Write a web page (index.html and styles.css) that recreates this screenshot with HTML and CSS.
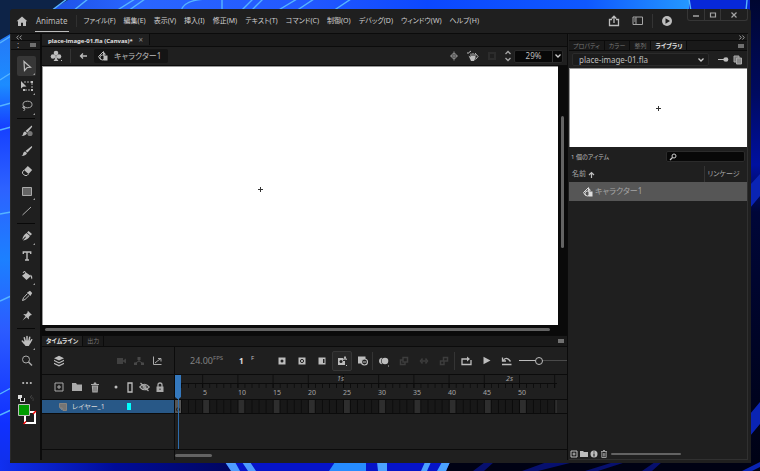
FILE: index.html
```html
<!DOCTYPE html>
<html lang="ja">
<head>
<meta charset="utf-8">
<title>Animate</title>
<link rel="stylesheet" href="styles.css">
</head>
<body>
<svg class="wallpaper" viewBox="0 0 760 471" preserveAspectRatio="none" aria-hidden="true">
  <defs>
    <linearGradient id="wl" x1="0" y1="0" x2="0" y2="1"><stop offset="0" stop-color="#2b6cf2"/><stop offset=".18" stop-color="#1c8cff"/><stop offset=".27" stop-color="#1640ff"/><stop offset=".4" stop-color="#2d62ff"/><stop offset=".55" stop-color="#1c80ff"/><stop offset=".7" stop-color="#2c5cff"/><stop offset=".9" stop-color="#1030ff"/><stop offset="1" stop-color="#1030e8"/></linearGradient>
    <linearGradient id="wt" x1="0" y1="0" x2="1" y2="0"><stop offset="0" stop-color="#1646d8"/><stop offset=".2" stop-color="#2a66ff"/><stop offset=".45" stop-color="#2258ff"/><stop offset=".62" stop-color="#0c48ff"/><stop offset=".85" stop-color="#0f58ff"/><stop offset="1" stop-color="#2498ff"/></linearGradient>
    <linearGradient id="wb" x1="0" y1="0" x2="1" y2="0"><stop offset="0" stop-color="#1030f0"/><stop offset=".5" stop-color="#000c98"/><stop offset="1" stop-color="#000660"/></linearGradient>
    <linearGradient id="wr" x1="0" y1="0" x2="0" y2="1"><stop offset="0" stop-color="#000630"/><stop offset=".2" stop-color="#000a60"/><stop offset=".35" stop-color="#0010a0"/><stop offset=".45" stop-color="#000638"/><stop offset="1" stop-color="#000214"/></linearGradient>
  </defs>
  <rect width="760" height="471" fill="#000214"/>
  <rect x="0" y="0" width="690" height="12" fill="url(#wt)"/>
  <rect x="689" y="0" width="63" height="12" fill="#0728d8"/>
  <rect x="0" y="0" width="14" height="471" fill="url(#wl)"/>
  <path d="M0 0H68L50 11 L12 33 0 40Z" fill="#0d2347"/>
  <g fill="none" stroke="#56b4ff" stroke-width="1.4">
    <path d="M67-1 51 11M88-1 73 11M135-1 116 11M145-1 128 11M181 11Q184-1 210-1M222-1V11M253-1 242 10M263-1 251 11M297-1 277 11M314-1 296 11M351-1 333 11M689-1 691 11M747 0 746 11"/>
    <path d="M0 43 11 36M0 80Q6 76 11 73M0 106 11 103M0 130 11 127M0 214 11 212M0 301 11 296M0 394 11 388M0 415 11 410"/>
  </g>
  <rect x="0" y="460" width="230" height="11" fill="url(#wb)"/>
  <path d="M225 462H450L446 471H231Z" fill="#0614c8"/>
  <path d="M225 462H235L240 471H231ZM242 462H250L256 471H248Z" fill="#4e9cff"/>
  <path d="M335 462H366V471H329Z" fill="#268cff"/>
  <path d="M377 462H387V471H378ZM425 462H431L427 471H421ZM442 462H450L446 471H437Z" fill="#4ba2ff"/>
  <path d="M485 462H494L484 471H473ZM547 462H574L538 471H522ZM614 462H626L598 471H585ZM655 462H662L652 471H642Z" fill="#07106e"/>
  <rect x="750" y="0" width="10" height="471" fill="url(#wr)"/>
  <path d="M760 174V196L750 208V185ZM760 402V424L750 436V414ZM760 462 742 471H752L760 467Z" fill="#0a24b4"/>
</svg>

<div class="window">
  <header class="menubar">
    <button class="ic home" aria-label="ホーム"><svg width="12" height="11" viewBox="0 0 12 11"><path fill="#bdbdbd" d="M6 .5.6 5.3H2V10h3V6.8h2V10h3V5.3h1.4Z"/></svg></button>
    <button class="app-tab">Animate</button>
    <nav class="menus">
      <button>ファイル(F)</button><button>編集(E)</button><button>表示(V)</button><button>挿入(I)</button><button>修正(M)</button><button>テキスト(T)</button><button>コマンド(C)</button><button>制御(O)</button><button>デバッグ(D)</button><button>ウィンドウ(W)</button><button>ヘルプ(H)</button>
    </nav>
    <div class="top-actions">
      <button class="ic" aria-label="共有"><svg width="12" height="12" viewBox="0 0 12 12" fill="none" stroke="#bdbdbd" stroke-width="1.3"><path d="M4 4.5H1.5V10.500H10.500V4.500H8M6 8V1.500M3.700 3.500 6 1.200 8.300 3.500"/></svg></button>
      <button class="ic" aria-label="ワークスペース"><svg width="12" height="10" viewBox="0 0 12 10"><path fill="none" stroke="#a5a5a5" d="M1 1H10.500V8.500H1Z"/><path stroke="#a5a5a5" d="M4 1V8.500M2 3H3.500M2 5H3.500"/></svg></button>
      <span class="vline"></span>
      <button class="ic" aria-label="ムービーのテスト"><svg width="12" height="12" viewBox="0 0 12 12"><circle cx="6" cy="6" r="5" fill="#bdbdbd"/><path fill="#1f1f1f" d="M4.500 3.200V8.800L9 6Z"/></svg></button>
    </div>
    <div class="win-buttons">
      <button aria-label="最小化"><svg width="8" height="8"><path stroke="#a5a5a5" stroke-width="1.500" d="M1 5H7"/></svg></button>
      <button aria-label="最大化"><svg width="8" height="8"><path fill="none" stroke="#a5a5a5" stroke-width="1.200" d="M1.500 2H6.500V6H1.500Z"/></svg></button>
      <button aria-label="閉じる"><svg width="8" height="8"><path stroke="#a5a5a5" stroke-width="1.200" d="M1.500 1.500 6.500 6.500M6.500 1.500 1.500 6.500"/></svg></button>
    </div>
  </header>

  <div class="workspace">
    <aside class="tools">
      <div class="collapse"><svg width="6" height="5" fill="none" stroke="#999"><path d="M2.500 .5 .8 2.500 2.500 4.500M5.500 .5 3.800 2.500 5.500 4.500"/></svg></div>
      <div class="grip"><span>:</span><i class="panel-menu"></i></div>
      <div class="tool-list">
        <button class="tool more on" aria-label="選択ツール"><svg width="14" height="14" viewBox="0 0 14 14"><path fill="none" stroke="#bdbdbd" stroke-width="1.200" d="M4 2.500 10.500 8.300 7.200 8.500 4.500 11.500Z"/></svg></button>
        <button class="tool more" aria-label="自由変形ツール"><svg width="14" height="14" viewBox="0 0 14 14"><path fill="none" stroke="#aaa" stroke-dasharray="2 1" d="M4 3H12V11H4"/><path fill="#bdbdbd" d="M1 2V9.500L3 7.700 6.500 7.500ZM3 10H5V12H3ZM11 2H13V4H11ZM11 10H13V12H11Z"/></svg></button>
        <button class="tool more" aria-label="投げ縄ツール"><svg width="14" height="14" viewBox="0 0 14 14" fill="none" stroke="#aaa"><ellipse cx="7.500" cy="5.500" rx="4.500" ry="3.300"/><path d="M3.500 7.500Q2 9 4 9.300T3.500 12"/><circle cx="4" cy="8.300" r="1"/></svg></button>
        <hr>
        <button class="tool" aria-label="流動ブラシツール"><svg width="14" height="14" viewBox="0 0 14 14" fill="#bdbdbd"><path d="M11.700 1.500Q12.500 2 12 3L7.500 8.500 5.500 7ZM5 7.500 7 9Q6 12 1.500 11.800 3.200 11 3.300 9 3.700 7.700 5 7.500Z"/><circle cx="10" cy="9.500" r="2.600" fill="#777"/></svg></button>
        <button class="tool" aria-label="ブラシツール"><svg width="14" height="14" viewBox="0 0 14 14" fill="#bdbdbd"><path d="M11.700 2Q12.500 2.500 12 3.500L7.500 8.500 5.500 7ZM5 7.500 7 9Q6 12 1.500 11.800 3.200 11 3.300 9 3.700 7.700 5 7.500Z"/></svg></button>
        <button class="tool" aria-label="消しゴムツール"><svg width="14" height="14" viewBox="0 0 14 14"><path fill="#bdbdbd" d="M7.800 2 12.200 6 8.500 10 4 6Z"/><path fill="none" stroke="#bdbdbd" d="M4 6 2.500 8V9.500L5 11.500H7L8.500 10"/></svg></button>
        <button class="tool more" aria-label="矩形ツール"><svg width="14" height="14" viewBox="0 0 14 14"><path fill="#656565" stroke="#aaa" d="M2.500 3.500H11.500V11.500H2.500Z"/></svg></button>
        <button class="tool" aria-label="線ツール"><svg width="14" height="14" viewBox="0 0 14 14"><path stroke="#aaa" d="M2.500 11 11 3"/></svg></button>
        <hr>
        <button class="tool more" aria-label="ペンツール"><svg width="14" height="14" viewBox="0 0 14 14" fill="#bdbdbd"><path d="M8.500 2 12 5 10.500 6.500 7 3.500ZM6.500 4 10 7Q8 10.800 3 11.500L6 8 5.300 7.400 2.300 10.800Q3 6 6.500 4Z"/></svg></button>
        <button class="tool" aria-label="テキストツール"><svg width="14" height="14" viewBox="0 0 14 14" fill="none" stroke="#bdbdbd" stroke-width="1.400"><path d="M3.300 5V3H10.700V5M7 3V11M5 11H9"/></svg></button>
        <button class="tool more" aria-label="ペイントバケツツール"><svg width="14" height="14" viewBox="0 0 14 14"><path fill="#bdbdbd" d="M6 3.500 11 7 6.500 11 2 6.700ZM10.500 5.500Q13 7 12 10.500 10.700 9 10.500 5.500Z"/><path fill="none" stroke="#bdbdbd" d="M7 7 4.500 2 3 4"/></svg></button>
        <button class="tool" aria-label="スポイトツール"><svg width="14" height="14" viewBox="0 0 14 14"><path fill="none" stroke="#bdbdbd" d="M7.500 4.500 3.500 8.800 2.500 11.500 5 10.500 9.300 6.300"/><path fill="#bdbdbd" d="M7 3.500 8 3 10 1.700 12.200 4 11 6 10.500 7Z"/></svg></button>
        <button class="tool" aria-label="アセットワープツール"><svg width="14" height="14" viewBox="0 0 14 14" fill="#bdbdbd"><path d="M7.800 1.800 12 6 10.500 6.300 8.800 8 9 10.500 6.500 8.200 2.500 11.500 5.600 7.300 3.200 5 6 5.200 7.500 3.500Z"/></svg></button>
        <hr>
        <button class="tool more" aria-label="手のひらツール"><svg width="14" height="14" viewBox="0 0 14 14"><path fill="none" stroke="#bdbdbd" stroke-width="1.500" stroke-linecap="round" d="M5.500 8 4.300 3.800M7 7V2.500M8.800 7.500 9.700 3.300M10 8.500 11.700 5.700M4.500 9.500 2.300 7"/><path fill="#bdbdbd" d="M4.800 6.500H9.800L10.500 9 8.800 12H5.500L3.500 9Z"/></svg></button>
        <button class="tool" aria-label="ズームツール"><svg width="14" height="14" viewBox="0 0 14 14" fill="none" stroke="#aaa"><circle cx="6" cy="5.500" r="3.500"/><path stroke-width="1.500" d="M8.500 8 12 11.500"/></svg></button>
        <button class="tool tall" aria-label="ツールバーを編集"><svg width="14" height="4" fill="#bdbdbd"><circle cx="3.200" cy="2" r="1.100"/><circle cx="7" cy="2" r="1.100"/><circle cx="10.800" cy="2" r="1.100"/></svg></button>
      </div>
      <svg class="swatches" width="20" height="32" viewBox="0 0 20 32" role="img" aria-label="線と塗り"><path fill="#ddd" d="M1 2H5V5H8V9H3V6H1Z"/><path fill="#111" d="M4 5H7V8H4Z"/><path fill="none" stroke="#3c3c3c" d="M13 4Q17 3 16 8M15 2 13 4 15 6"/><path fill="#1f1f1f" stroke="#fff" stroke-width="2" d="M8 19H18V30H8Z"/><path stroke="#f00000" stroke-width="1.500" d="M6.500 31 9 28.500M16 21 19 18"/><path fill="#009c00" stroke="#bdbdbd" d="M1.500 11.500H12.500V22.500H1.500Z"/></svg>
    </aside>

    <main class="center">
      <div class="doc-tabs"><button class="doc-tab">place-image-01.fla (Canvas)* <span>×</span></button></div>
      <div class="editbar">
        <button class="ic club" aria-label="シーンを編集"><svg width="14" height="14" viewBox="0 0 14 14" fill="#bdbdbd"><circle cx="7" cy="4" r="2.300"/><circle cx="4" cy="7.500" r="2.300"/><circle cx="10" cy="7.500" r="2.300"/><path d="M6.500 5H7.500L8 10 9.500 12H4.500L6 10ZM12 11H13V12H12Z"/></svg></button>
        <span class="vline"></span>
        <button class="ic back" aria-label="戻る"><svg width="8" height="8" fill="none" stroke="#bdbdbd" stroke-width="1.300"><path d="M8 4H1.500M4 1.500 1.500 4 4 6.500"/></svg></button>
        <div class="crumb"><svg width="12" height="12" viewBox="0 0 12 12"><path fill="none" stroke="#bdbdbd" d="M6.500 1.500 1.500 6.500 3.500 9.500"/><circle cx="5.500" cy="7.500" r="2.500" fill="none" stroke="#bdbdbd"/><path fill="#bdbdbd" d="M6 1 9 4.500 6 5ZM6.500 5.500H10.500V10.500H6.500Z"/></svg><span>キャラクター1</span></div>
        <div class="stage-tools">
          <button class="ic" aria-label="ステージを中央に配置"><svg width="10" height="10" viewBox="0 0 10 10" fill="none" stroke="#8c8c8c"><circle cx="5" cy="5" r="2.500"/><path d="M5 .5V9.500M1 5H9"/></svg></button>
          <button class="ic" aria-label="回転"><svg width="12" height="12" viewBox="0 0 12 12"><path fill="#bdbdbd" d="M1.500 5.500 3.500 7V3.500H4.500V6H5.500V3H6.500V6H7.500V4H8.500V8L7 11H4Z"/><path fill="none" stroke="#bdbdbd" d="M2 2.500 4 1M8 3 11 6.500 8.500 9.500M1 2V4"/></svg></button>
          <button class="ic" aria-label="クリップ"><svg width="10" height="10" fill="none" stroke="#2c2c2c"><path stroke-width="2" d="M2 2H8V8H2Z"/></svg></button>
          <button class="ic step" aria-label="ズーム増減"><svg width="8" height="12" fill="none" stroke="#a5a5a5" stroke-width="1.300"><path d="M1.500 4 4 1.500 6.500 4M1.500 8 4 10.500 6.500 8"/></svg></button>
          <div class="zoom"><input aria-label="ズーム" value="29%"><button aria-label="ズームの選択"><svg width="8" height="6" fill="none" stroke="#ccc" stroke-width="1.300"><path d="M1.500 1.500 4 4 6.500 1.500"/></svg></button></div>
        </div>
      </div>
      <div class="stage-area">
        <div class="stage"><svg class="cross at-stage" width="7" height="7"><path stroke="#333" d="M3.500 1V6M1 3.500H6"/></svg></div>
        <div class="vscroll"><i></i></div>
        <div class="hscroll"><i></i></div>
      </div>

      <section class="timeline">
        <div class="panel-tabs"><button class="on">タイムライン</button><button>出力</button><i class="panel-menu"></i></div>
        <div class="tl-body">
          <div class="layers">
            <div class="tl-bar">
              <button class="ic" aria-label="レイヤー表示"><svg width="12" height="12" viewBox="0 0 12 12" fill="#bdbdbd"><path d="M6 .8 11 3.200 6 5.600 1 3.200ZM1 4.800 6 7.200 11 4.800V6L6 8.500 1 6ZM1 7.700 6 10.100 11 7.700V9L6 11.500 1 9Z"/></svg></button>
              <button class="ic push" aria-label="カメラ"><svg width="10" height="10" fill="#414141"><path d="M1 2H7V8H1ZM7 4.500 10 2.500V7.500L7 5.500Z"/></svg></button>
              <button class="ic" aria-label="親子関係"><svg width="10" height="10"><path fill="#484848" d="M3.500 1H6.500V4H3.500ZM0 6.500H3V9H0ZM7 6.500H10V9H7Z"/><path fill="none" stroke="#484848" d="M5 4V5L1.500 7M5 5 8.500 7"/></svg></button>
              <button class="ic" aria-label="レイヤーの深度"><svg width="10" height="10" fill="none" stroke="#aaa"><path d="M1.500 .5V8.500H9.500M3 7 6 4.500 8.500 3M6 2.500H9V5.500"/></svg></button>
            </div>
            <div class="tl-head">
              <button class="ic" aria-label="新規レイヤー"><svg width="10" height="10" fill="none" stroke="#aaa"><path d="M1 1H9V9H1ZM5 3V7M3 5H7"/></svg></button>
              <button class="ic" aria-label="新規フォルダー"><svg width="12" height="10" fill="#aaa"><path d="M1 1H5L6 2.500H11V9H1Z"/></svg></button>
              <button class="ic" aria-label="削除"><svg width="10" height="11" fill="#aaa"><path d="M1 2H3.500L4 .5H6L6.500 2H9V3H1ZM1.800 3.500H8.200L7.700 10.500H2.300Z"/><path stroke="#444" stroke-width=".7" d="M4 4.500V9.500M6 4.500V9.500"/></svg></button>
              <button class="ic push" aria-label="ハイライト"><svg width="6" height="6" fill="#bdbdbd"><circle cx="3" cy="3" r="1.500"/></svg></button>
              <button class="ic" aria-label="アウトライン"><svg width="6" height="11" fill="none" stroke="#bdbdbd" stroke-width="1.300"><path d="M1 1H5V10H1Z"/></svg></button>
              <button class="ic" aria-label="表示・非表示"><svg width="11" height="10" fill="none" stroke="#aaa" stroke-width="1.200"><path d="M.8 5Q5.500-.5 10.200 5 5.500 10.500 .8 5ZM1.500 1 9.500 9"/><circle cx="5.500" cy="5" r="1.500"/></svg></button>
              <button class="ic" aria-label="ロック"><svg width="8" height="11"><path fill="none" stroke="#aaa" stroke-width="1.300" d="M2 5V3Q2 1 4 1T6 3V5"/><path fill="#aaa" d="M.5 4.500H7.500V10H.5Z"/><path stroke="#222" d="M4 6.500V8"/></svg></button>
            </div>
            <div class="layer"><svg width="8" height="8" viewBox="0 0 8 8"><path fill="#757575" stroke="#a08f80" stroke-width=".7" d="M.5 .5H7.500V7.500H4L3.500 5 .5 4.500Z"/><path fill="#999" d="M.5 5 3 5.500 3.500 7.500Z"/></svg><span>レイヤー_1</span><i class="chip"></i></div>
            <div class="tl-empty"></div>
            <div class="tl-foot"></div>
          </div>
          <div class="frames">
            <div class="tl-bar">
              <span class="fps">24.00<sup>FPS</sup></span><b class="frame-no">1</b><span class="unit">F</span>
              <div class="frame-tools">
                <button class="ic" aria-label="キーフレーム"><svg width="8" height="8"><path fill="#bdbdbd" d="M.5 .5H7.500V7.500H.5Z"/><circle cx="4" cy="4" r="1.500" fill="#222"/></svg></button>
                <button class="ic" aria-label="空白キーフレーム"><svg width="8" height="8"><path fill="#bdbdbd" d="M.5 .5H7.500V7.500H.5Z"/><circle cx="4" cy="4" r="1.600" fill="none" stroke="#222"/></svg></button>
                <button class="ic" aria-label="フレーム"><svg width="8" height="8"><path fill="#bdbdbd" d="M.5 .5H7.500V7.500H.5Z"/><path fill="#222" d="M5 2H6.500V6H5Z"/></svg></button>
                <button class="ic on" aria-label="自動キーフレーム"><svg width="12" height="12"><path fill="#bdbdbd" d="M2 3H7V6H9V10H2Z"/><circle cx="5" cy="6.500" r="1.500" fill="#222"/><path fill="none" stroke="#bdbdbd" d="M7.500 5 9 1.500 10.500 5M8 4H10M10 10.500H11"/></svg></button>
                <button class="ic" aria-label="フレームを削除"><svg width="11" height="11"><path fill="#bdbdbd" d="M1 1.500H8.500V5L5 8.500H1Z"/><circle cx="7.500" cy="7" r="3" fill="#222" stroke="#bdbdbd" stroke-width="1.200"/><path stroke="#bdbdbd" d="M6 7H9"/></svg></button>
                <span class="vline"></span>
                <button class="ic" aria-label="オニオンスキン"><svg width="12" height="12" fill="#bdbdbd"><circle cx="7" cy="6" r="3.300"/><path d="M4.200 2.700Q1 3 1 6T4.200 9.300Q2 6 4.200 2.700ZM10 10.500H11V11.500H10Z"/></svg></button>
                <button class="ic" aria-label="複数フレームを編集"><svg width="10" height="10" fill="none" stroke="#3d3d3d" stroke-width="1.500"><path d="M4 1.500H8.500V6H4ZM4 4H1.500V8.500H6V6"/></svg></button>
                <button class="ic" aria-label="トゥイーン"><svg width="10" height="8" fill="none" stroke="#3d3d3d" stroke-width="1.500"><path d="M3.500 1.500 1.500 4 3.500 6.500M6.500 1.500 8.500 4 6.500 6.500M4 3V5M6 3V5"/></svg></button>
                <button class="ic" aria-label="シェイプトゥイーン"><svg width="10" height="10" fill="none" stroke="#3d3d3d" stroke-width="1.500"><path d="M4.500 4.500V1.500H8.500V5H4.500ZM5 5.500V8.500H1.500V5H4"/></svg></button>
                <span class="vline"></span>
                <button class="ic" aria-label="ループ"><svg width="11" height="10" fill="none" stroke="#bdbdbd" stroke-width="1.300"><path d="M3 3H1V8.500H10V4M2 3H7"/><path fill="#bdbdbd" stroke="none" d="M6 .5 9 3 6 5.500Z"/></svg></button>
                <button class="ic" aria-label="再生"><svg width="9" height="9" fill="#bdbdbd"><path d="M1.500 .8V8.200L8.500 4.500Z"/></svg></button>
                <button class="ic" aria-label="タイムラインのリセット"><svg width="11" height="10" fill="none" stroke="#bdbdbd" stroke-width="1.300"><path d="M2 5Q5-.5 9.500 5.500M1.500 1.500V5H5M1 8.500H10.500"/></svg></button>
                <input type="range" aria-label="タイムラインの拡大縮小" min="0" max="10" value="4">
              </div>
            </div>
            <div class="ruler">
              <svg class="ticks" width="382" height="24" viewBox="0 0 382 24"><defs><pattern id="tk" width="7.04" height="24" patternUnits="userSpaceOnUse"><path fill="#080808" d="M6.300 9H7.040V13H6.300Z"/></pattern><pattern id="tk5" x="-7.04" width="35.200" height="24" patternUnits="userSpaceOnUse"><path fill="#080808" d="M34.400 0H35.200V13H34.400Z"/></pattern></defs><rect width="381" height="24" fill="url(#tk)"/><rect x="10" width="371" height="24" fill="url(#tk5)"/><path fill="#0b0b0b" d="M0 8H382V9H0Z"/></svg>
              <div class="seconds"><span>1s</span><span>2s</span></div>
              <div class="numbers"><span>5</span><span>10</span><span>15</span><span>20</span><span>25</span><span>30</span><span>35</span><span>40</span><span>45</span><span>50</span></div>
            </div>
            <div class="frame-row"><svg width="382" height="13" viewBox="0 0 382 13"><defs><pattern id="fr" width="7.04" height="13" patternUnits="userSpaceOnUse"><path fill="#0b0b0b" d="M6.100 0H7.040V13H6.100Z"/></pattern><pattern id="fr5" x="-7.04" width="35.200" height="13" patternUnits="userSpaceOnUse"><path fill="#2e2e2e" d="M0 0H6.100V13H0Z"/></pattern></defs><rect width="382" height="13" fill="#181818"/><rect x="10" width="372" height="13" fill="url(#fr5)"/><rect width="382" height="13" fill="url(#fr)"/><rect width="6" height="13" fill="#565656"/><rect x="1.500" y="8" width="3" height="3" rx="1" fill="none" stroke="#222"/></svg></div>
            <div class="tl-empty"></div>
            <div class="tl-foot"><i></i></div>
            <div class="playhead"></div>
          </div>
        </div>
      </section>
    </main>

    <aside class="library">
      <div class="collapse"><svg width="6" height="5" fill="none" stroke="#999"><path d="M.5 .5 2.200 2.500 .5 4.500M3.500 .5 5.200 2.500 3.500 4.500"/></svg></div>
      <div class="panel-tabs"><button>プロパティ</button><button>カラー</button><button>整列</button><button class="on">ライブラリ</button><i class="panel-menu"></i></div>
      <div class="lib-doc">
        <select aria-label="ドキュメント"><option>place-image-01.fla</option></select>
        <svg class="chev" width="8" height="6" fill="none" stroke="#ccc" stroke-width="1.300"><path d="M1.500 1.500 4 4 6.500 1.500"/></svg>
        <button class="ic" aria-label="ライブラリを固定"><svg width="11" height="7" fill="#bdbdbd"><path d="M0 3H5V4H0ZM5 3 7 1.500V5.500L5 4Z"/><circle cx="8" cy="3.500" r="2.300"/></svg></button>
        <button class="ic" aria-label="新規ライブラリパネル"><svg width="10" height="10"><path fill="#777" stroke="#aaa" d="M1 1H6V7H1Z"/><path fill="#888" stroke="#aaa" d="M3.500 3H8.500V9H3.500Z"/></svg></button>
      </div>
      <div class="preview"><svg class="cross" width="7" height="7"><path stroke="#333" d="M3.500 1V6M1 3.500H6"/></svg></div>
      <div class="lib-search"><label for="q">1 個のアイテム</label><div class="search"><svg width="8" height="8" fill="none" stroke="#ccc"><circle cx="5" cy="3" r="2"/><path stroke-width="1.300" d="M3.500 4.500 1 7"/></svg><input id="q" type="search"></div></div>
      <table>
        <thead><tr><th>名前 <svg width="7" height="7" fill="none" stroke="#bdbdbd" stroke-width="1.200"><path d="M3.500 7V1.500M1 4 3.500 1.500 6 4"/></svg></th><th class="link">リンケージ</th></tr></thead>
        <tbody><tr><td><svg width="12" height="12" viewBox="0 0 12 12"><path fill="none" stroke="#ddd" d="M6.500 1.500 1.500 6.500 3.500 9.500"/><circle cx="5.500" cy="7.500" r="2.500" fill="none" stroke="#ddd"/><path fill="#ddd" d="M6 1 9 4.500 6 5ZM6.500 5.500H10.500V10.500H6.500Z"/></svg>キャラクター1</td><td></td></tr></tbody>
      </table>
      <div class="lib-foot">
        <button class="ic" aria-label="新規シンボル"><svg width="8" height="8" fill="none" stroke="#bdbdbd"><path d="M1 1H7V7H1ZM4 2.500V5.500M2.500 4H5.500"/></svg></button>
        <button class="ic" aria-label="新規フォルダー"><svg width="8" height="8" fill="#bdbdbd"><path d="M0 1H3L4 2H8V7H0Z"/></svg></button>
        <button class="ic" aria-label="プロパティ"><svg width="8" height="8"><circle cx="4" cy="4" r="3.500" fill="#bdbdbd"/><path stroke="#222" stroke-width="1.200" d="M4 3.500V6.500M4 1.500V2.500"/></svg></button>
        <button class="ic" aria-label="削除"><svg width="8" height="8" fill="none" stroke="#999"><path d="M1 1.500H7M3 .5H5M1.800 2V7.500H6.200V2M3.300 3V6.500M4.800 3V6.500"/></svg></button>
        <i></i>
      </div>
    </aside>
  </div>
</div>
</body>
</html>
```
FILE: styles.css
```css
* { box-sizing: border-box; }

body {
  margin: 0;
  height: 100vh;
  padding: 9px 9px 8px 10px;
  display: flex;
  overflow: hidden;
  background: #000214;
  color: #bdbdbd;
  font: 8px/12px "Noto Sans", "Noto Sans CJK JP", sans-serif;
  font-feature-settings: "palt";
}

button, input, select {
  margin: 0;
  padding: 0;
  border: 0;
  background: none;
  color: inherit;
  font: inherit;
  font-feature-settings: inherit;
  border-radius: 0;
  white-space: nowrap;
}

svg { display: block; flex: none; }

.wallpaper { position: absolute; inset: 0; width: 100%; height: 100%; }

.window {
  position: relative;
  flex: 1;
  min-width: 0;
  display: flex;
  flex-direction: column;
  background: #1f1f1f;
  border-radius: 3px 3px 0 0;
  padding: 0 3px 3px 0;
}

.ic { display: flex; align-items: center; justify-content: center; flex: none; }
.vline { width: 1px; height: 14px; background: #343434; flex: none; }
.panel-menu { width: 6px; height: 4px; background: #707070; margin-left: auto; align-self: center; }

/* menu bar */
.menubar { display: flex; align-items: center; height: 24px; flex: none; }
.home { width: 24px; }
.app-tab { height: 23px; padding: 2px 1px 0; border-bottom: 1px solid #bdbdbd; margin: 0 7px 0 1px; align-self: flex-start; }
.menus { display: flex; gap: 8px; padding-left: 7px; border-left: 1px solid #303030; font-size: 7px; color: #d0d0d0; }
.top-actions { display: flex; align-items: center; gap: 8px; margin-left: auto; margin-right: 14px; }
.top-actions .ic + .ic { margin-left: 4px; }
.win-buttons { display: flex; align-self: flex-start; border: 1px solid #363636; border-top: 0; border-radius: 0 0 3px 3px; }
.win-buttons button { display: grid; place-items: center; width: 16px; height: 11px; }
.win-buttons button + button { border-left: 1px solid #363636; }
.win-buttons button:last-child { width: 27px; }

.workspace { flex: 1; min-height: 0; display: flex; border-top: 1px solid #0b0b0b; }
.collapse { height: 6px; background: #191919; padding: 1px 5px 0; flex: none; }

/* tools */
.tools { width: 32px; flex: none; display: flex; flex-direction: column; border-right: 2px solid #0b0b0b; border-left: 1px solid #2b2b2b; }
.grip { display: flex; height: 10px; flex: none; padding: 0 4px 0 6px; line-height: 7px; border-bottom: 1px solid #0b0b0b; border-top: 1px solid #0b0b0b; }
.tool-list { padding: 6px 5px 0 6px; display: flex; flex-direction: column; }
.tool { position: relative; display: grid; place-items: center; width: 19px; height: 20px; border-radius: 2px; }
.tool.on { background: #373737; }
.tool.tall { height: 24px; }
.tool.more::after { content: ""; position: absolute; right: 1px; bottom: 1px; border: 1px solid #999; border-top-color: transparent; border-left-color: transparent; }
.tool-list hr { width: 100%; height: 1px; margin: 2px 0; border: 0; background: #080808; flex: none; }
.swatches { margin: -2px 0 0 6px; }

/* document */
.center { flex: 1; min-width: 0; display: flex; flex-direction: column; border-right: 1px solid #0b0b0b; }
.doc-tabs { height: 12px; background: #191919; flex: none; }
.doc-tab { height: 11px; line-height: 11px; padding: 0 6px; background: #202020; border-right: 1px solid #0b0b0b; font-size: 6px; font-weight: 700; color: #e0e0e0; }
.doc-tab span { margin-left: 4px; font-size: 8px; font-weight: 400; color: #888; }
.editbar { display: flex; align-items: center; height: 20px; flex: none; border-top: 1px solid #0b0b0b; border-bottom: 1px solid #0b0b0b; padding-right: 4px; }
.club { width: 28px; }
.back { width: 23px; }
.crumb { display: flex; align-items: center; gap: 5px; height: 14px; padding: 0 7px 0 3px; background: #141414; border-radius: 2px; }
.stage-tools { display: flex; align-items: center; margin-left: auto; }
.stage-tools > .ic { width: 19px; }
.stage-tools > .step { width: 12px; margin-left: 1px; }
.zoom { display: flex; width: 49px; height: 13px; background: #080808; border: 1px solid #292929; border-radius: 2px; }
.zoom input { width: 37px; text-align: center; }
.zoom button { width: 11px; display: grid; place-items: center; border-left: 1px solid #333; }

.stage-area { flex: 1; min-height: 0; display: grid; grid-template-columns: 1fr 9px; grid-template-rows: 1fr 10px; background: #0a0a0a; }
.stage { position: relative; background: #fff; border-top: 1px solid #999; border-left: 1px solid #999; }
.at-stage { position: absolute; left: 41.6%; top: 46%; }
.vscroll { display: flex; flex-direction: column; align-items: center; }
.vscroll i { width: 3px; height: 51%; margin-top: 50px; background: #636363; border-radius: 2px; }
.hscroll { grid-column: 1 / 3; padding: 3px 17px 0 3px; }
.hscroll i { display: block; height: 3px; background: #636363; border-radius: 2px; }

/* panel tabs */
.panel-tabs { display: flex; height: 12px; flex: none; background: #191919; border-top: 1px solid #0b0b0b; border-bottom: 1px solid #0b0b0b; font-size: 6px; line-height: 10px; color: #777; }
.panel-tabs button { padding: 0 4px; border-right: 1px solid #0b0b0b; line-height: 10px; }
.panel-tabs .on { background: #202020; color: #e0e0e0; font-weight: 700; }
.panel-tabs .panel-menu { margin-right: 3px; }

/* timeline */
.tl-body { display: flex; }
.layers { width: 133px; flex: none; border-right: 1px solid #0b0b0b; }
.frames { position: relative; flex: 1; min-width: 0; overflow: hidden; }
.tl-bar { display: flex; align-items: center; height: 28px; border-bottom: 1px solid #0b0b0b; }
.layers .tl-bar { padding: 0 8px 0 8px; }
.layers .tl-bar .ic { width: 18px; }
.tl-head { display: flex; align-items: center; height: 25px; padding: 0 7px 0 8px; border-bottom: 1px solid #0b0b0b; }
.tl-head .ic { width: 18px; }
.tl-head .push { width: 12px; }
.tl-head .push ~ .ic { width: 15px; }
.push { margin-left: auto; }
.layer { display: flex; align-items: center; height: 14px; padding: 0 43px 0 17px; gap: 5px; background: #285887; color: #d8d8d8; border-bottom: 1px solid #0b0b0b; font-size: 7px; }
.chip { width: 4px; height: 7px; background: #00ffff; margin-left: auto; }
.tl-empty { height: 36px; border-bottom: 1px solid #0b0b0b; }
.tl-foot { height: 10px; padding-top: 4px; }
.tl-foot i { display: block; width: 37px; height: 3px; border-radius: 2px; background: #636363; }
.fps { width: 64px; padding-left: 15px; flex: none; color: #828282; font-size: 9px; }
.fps sup { font-size: 6px; line-height: 6px; }
.frame-no { width: 12px; color: #e0e0e0; }
.unit { width: 21px; font-size: 6px; line-height: 16px; align-self: flex-start; padding-top: 3px; }
.frame-tools { flex: 1; min-width: 0; display: flex; align-items: center; }
.frame-tools .ic { width: 20px; height: 20px; }
.frame-tools .vline { height: 18px; margin: 0 1px 0 0; }
.frame-tools .on { background: #272727; border: 1px solid #363636; border-radius: 2px; }
.frame-tools input { flex: 1; min-width: 0; height: 10px; margin-left: 3px; appearance: none; background: linear-gradient(90deg, #bdbdbd 40%, #4a4a4a 40%) center / 100% 1px no-repeat; }
.frame-tools input::-webkit-slider-thumb { appearance: none; width: 8px; height: 8px; border: 1px solid #bdbdbd; border-radius: 50%; background: #1f1f1f; }

.ruler { height: 25px; border-bottom: 1px solid #0b0b0b; font-size: 7px; line-height: 8px; color: #a5a5a5; display: grid; }
.ruler > * { grid-area: 1 / 1; }
.seconds { display: grid; grid-template-columns: 169px 169px; text-align: right; height: 8px; font-style: italic; }
.numbers { display: grid; grid-template-columns: repeat(10, 35px); padding: 14px 0 0 28px; width: 380px; height: 24px; }
.frame-row { height: 14px; border-bottom: 1px solid #0b0b0b; }
.playhead { position: absolute; left: 0; top: 28px; bottom: 11px; width: 6px; background: linear-gradient(#2c6cac, #2c6cac) 3px 0 / 1px 100% no-repeat; }
.playhead::before { content: ""; display: block; height: 24px; background: #3478bd; clip-path: polygon(0 0, 100% 0, 100% 92%, 60% 100%, 40% 100%, 0 92%); }

/* library */
.library { width: 179px; flex: none; display: flex; flex-direction: column; margin-left: 1px; border-right: 1px solid #303030; border-bottom: 1px solid #303030; }
.library .collapse { display: flex; justify-content: flex-end; padding-right: 2px; }
.library .panel-tabs { height: 11px; }
.lib-doc { display: flex; align-items: center; height: 17px; flex: none; padding: 0 4px 0 3px; }
.lib-doc select { appearance: none; flex: 1; min-width: 0; height: 13px; line-height: 11px; padding-left: 6px; background: #1b1b1b; border: 1px solid #2b2b2b; border-radius: 2px; }
.chev { margin-left: -12px; margin-right: 13px; pointer-events: none; }
.lib-doc .ic + .ic { margin-left: 4px; }
.preview { display: grid; place-items: center; height: 79px; flex: none; background: #fff; border-top: 1px solid #999; border-left: 1px solid #999; }
.lib-search { display: flex; align-items: center; justify-content: space-between; height: 19px; flex: none; padding: 0 2px 0 2px; font-size: 6px; }
.search { display: flex; align-items: center; width: 79px; height: 11px; padding-left: 2px; background: #080808; border: 1px solid #2b2b2b; border-radius: 2px; }
.search input { flex: 1; min-width: 0; outline: 0; }
table { width: 100%; border-collapse: collapse; table-layout: fixed; }
th { height: 16px; padding: 0 0 0 3px; text-align: left; font-weight: 400; font-size: 7px; color: #a5a5a5; }
th svg { display: inline-block; vertical-align: middle; }
.link { width: 43px; border-left: 1px solid #343434; }
td { height: 19px; padding: 0 0 0 13px; background: #565656; color: #a5a5a5; }
td svg { display: inline-block; vertical-align: middle; margin-right: 1px; }
.lib-foot { display: flex; align-items: center; gap: 2px; height: 11px; padding-left: 1px; margin-top: auto; }
.lib-foot i { width: 70px; height: 2px; margin-left: 1px; background: #636363; border-radius: 1px; }
```
